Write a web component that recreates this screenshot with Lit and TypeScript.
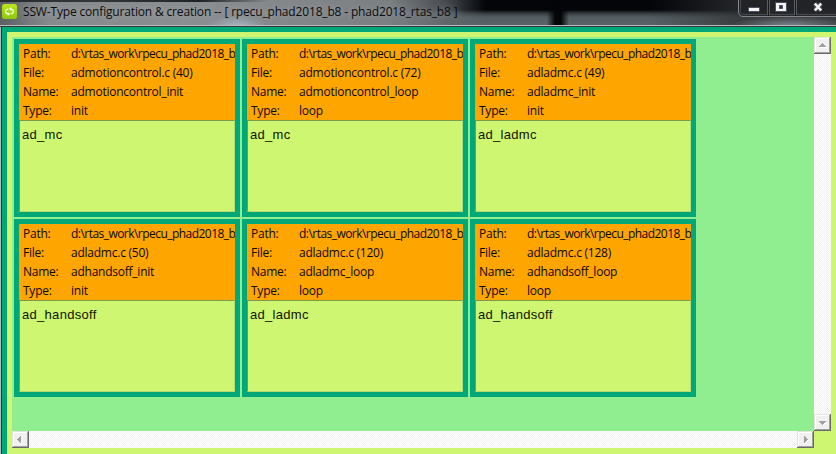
import { LitElement, html, css } from "lit";
import { customElement, property } from "lit/decorators.js";

interface TypeInfo {
  file: string;
  name: string;
  type: string;
  item: string;
}

const PATH = "d:\\rtas_work\\rpecu_phad2018_b8";

const TYPES: TypeInfo[] = [
  { file: "admotioncontrol.c (40)", name: "admotioncontrol_init", type: "init", item: "ad_mc" },
  { file: "admotioncontrol.c (72)", name: "admotioncontrol_loop", type: "loop", item: "ad_mc" },
  { file: "adladmc.c (49)", name: "adladmc_init", type: "init", item: "ad_ladmc" },
  { file: "adladmc.c (50)", name: "adhandsoff_init", type: "init", item: "ad_handsoff" },
  { file: "adladmc.c (120)", name: "adladmc_loop", type: "loop", item: "ad_ladmc" },
  { file: "adladmc.c (128)", name: "adhandsoff_loop", type: "loop", item: "ad_handsoff" },
];

@customElement("type-card")
export class TypeCard extends LitElement {
  @property({ attribute: false }) info!: TypeInfo;

  static styles = css`
    :host {
      display: flex;
      flex-direction: column;
      box-sizing: border-box;
      width: 226px;
      height: 178px;
      border: 5px solid #00a878;
      background: #cff670;
      overflow: hidden;
    }
    .head {
      height: 76px;
      background: #ffa500;
      overflow: hidden;
      flex: none;
    }
    .row {
      display: flex;
      height: 19px;
      padding-left: 4px;
      font: 12px/19px "Open Sans", "Noto Sans", sans-serif;
      letter-spacing: -0.24px;
      color: #0c0700;
      white-space: nowrap;
    }
    .key {
      width: 48px;
      flex: none;
    }
    .path {
      letter-spacing: -0.54px;
    }
    .list {
      flex: 1;
      box-sizing: border-box;
      border: 1px solid #7a9a50;
      border-right-color: #b9d873;
      border-bottom-color: #b9d873;
      padding-left: 2px;
      font: 13px/28px "Liberation Sans", Arial, sans-serif;
      letter-spacing: 0.3px;
      color: #101400;
    }
  `;

  render() {
    const rows = [
      ["Path:", PATH, "path"],
      ["File:", this.info.file, "file"],
      ["Name:", this.info.name, "name"],
      ["Type:", this.info.type, "type"],
    ];
    return html`
      <div class="head">
        ${rows.map(([k, v, c]) => html`<div class="row"><span class="key">${k}</span><span class=${c}>${v}</span></div>`)}
      </div>
      <div class="list">${this.info.item}</div>
    `;
  }
}

const ARROWS: Record<string, string> = {
  up: "M8 6h1v1h1v1h1v1h1v1H5V9h1V8h1V7h1z",
  down: "M5 7h7v1h-1v1h-1v1H9v1H8v-1H7V9H6V8H5z",
  left: "M9 5v7H8v-1H7v-1H6V9H5V8h1V7h1V6h1V5z",
  right: "M7 5h1v1h1v1h1v1h1v1h-1v1H9v1H8v1H7z",
};

@customElement("scroll-button")
export class ScrollButton extends LitElement {
  @property() direction = "up";

  static styles = css`
    :host {
      display: block;
      width: 17px;
      height: 17px;
      flex: none;
    }
    svg {
      display: block;
    }
  `;

  render() {
    return html`<svg width="17" height="17" shape-rendering="crispEdges">
      <path fill="#696969" d="M0 0h17v17H0z" />
      <path fill="#e3e3e3" d="M0 0h16v16H0z" />
      <path fill="#a0a0a0" d="M15 1h1v15H1v-1h14z" />
      <path fill="#fff" d="M1 1h14v14H1z" />
      <path fill="#f0f0f0" d="M2 2h13v13H2z" />
      <path fill="#fff" transform="translate(1 1)" d=${ARROWS[this.direction]} />
      <path fill="#a0a0a0" d=${ARROWS[this.direction]} />
    </svg>`;
  }
}

@customElement("app-root")
export class AppRoot extends LitElement {
  static styles = css`
    :host {
      display: flex;
      flex-direction: column;
      width: 836px;
      height: 454px;
      overflow: hidden;
      background: #cff670;
    }
    .titlebar {
      display: flex;
      flex: none;
      box-sizing: border-box;
      height: 27px;
      padding-left: 2px;
      border-bottom: 1px solid #34373b;
      background:
        linear-gradient(#b7bbbf, #b7bbbf) 0 25px / 100% 1px no-repeat,
        linear-gradient(90deg, transparent, rgba(3, 4, 8, 0.98) 8px 14px, transparent 22px) 547px 0 / 22px 25px no-repeat,
        radial-gradient(ellipse 60px 10px at 790px 26px, rgba(178, 195, 208, 0.55), transparent),
        radial-gradient(ellipse 30px 10px at 237px 26px, rgba(190, 210, 230, 0.6), transparent),
        linear-gradient(90deg, #26282a, #34373a 90px, #202326 200px, transparent 270px) 0 0 / 270px 2px no-repeat,
        linear-gradient(90deg, #5d6062, #888b8d 50px, #8b8e90 200px, #7a7f82 390px, rgba(100, 105, 109, 0.7) 445px, transparent 485px),
        linear-gradient(90deg, transparent 650px, rgba(48, 49, 51, 0.75) 740px),
        linear-gradient(#030509 0 10px, #30383c 13px, #535d61 17px, #596367 25px);
    }
    .logo {
      margin-top: 4px;
      flex: none;
    }
    .title {
      margin-left: 6px;
      font: 12px/24px "Open Sans", "Noto Sans", sans-serif;
      letter-spacing: -0.165px;
      color: #0b0c0e;
      white-space: pre;
      text-shadow: 0 0 7px rgba(190, 193, 196, 0.7);
    }
    .controls {
      margin-left: auto;
      flex: none;
    }
    .frame {
      flex: 1;
      min-height: 0;
      display: flex;
      border-left: 1px solid #b3b9bd;
    }
    .client {
      flex: 1;
      display: grid;
      grid-template: 394px 17px / 802px 17px;
      border-left: 1px solid #30383c;
      background:
        linear-gradient(#00a878, #00a878) 0 0 / 100% 5px no-repeat,
        linear-gradient(#00a878, #00a878) 0 0 / 5px 100% no-repeat,
        #cff670;
      padding: 10px 5px 0 10px;
    }
    .canvas {
      background: #90ee90;
      display: grid;
      grid-template-columns: repeat(3, 226px);
      grid-auto-rows: 178px;
      align-content: start;
      gap: 2px;
      padding: 2px;
    }
    .bar {
      display: flex;
      justify-content: space-between;
      background: repeating-conic-gradient(#fff 0 25%, #f0f0f0 0 50%) 0 0 / 2px 2px;
    }
    .vertical {
      flex-direction: column;
    }
  `;

  render() {
    return html`
      <header class="titlebar">
        <svg class="logo" width="15" height="15" viewBox="0 0 15 15">
          <defs>
            <linearGradient id="g" x2="0" y2="1">
              <stop stop-color="#b8e51c" />
              <stop offset="1" stop-color="#8cc80c" />
            </linearGradient>
          </defs>
          <rect width="15" height="15" rx="2.500" fill="url(#g)" />
          <path d="M6.300 5Q3.600 5.200 3.600 7.500Q3.600 9.600 6 10M8.700 10Q11.400 9.800 11.400 7.500Q11.400 5.400 9 5" fill="none" stroke="#f7ffe0" stroke-width="1.200" />
          <path d="M9.300 3L6.900 5L9.300 7zM5.700 8L8.100 10L5.700 12z" fill="#f7ffe0" />
        </svg>
        <span class="title">SSW-Type configuration &amp; creation -- [ rpecu_phad2018_b8 - phad2018_rtas_b8 ]</span>
        <svg class="controls" width="98" height="18" viewBox="738 0 98 18">
          <path d="M738 0H836V16H743Q738 16 738 12z" fill="#202225" fill-opacity=".65" />
          <path d="M738.500 0V12Q739 16.500 743 16.500H836" fill="none" stroke="#82868a" />
          <path d="M740.500 0V12Q741 14.500 743 14.500H836" fill="none" stroke="#45494d" />
          <path d="M767.500 0V15M769.500 0V15M794.500 0V15M796.500 0V15" fill="none" stroke="#595c60" />
          <path d="M768.500 0V16M795.500 0V16" fill="none" stroke="#17191c" />
          <rect x="748.500" y="7.500" width="11" height="4" rx="1" fill="#f3f3f3" stroke="#4c5062" />
          <path d="M775.500 2.500H786.500V11.500H775.500z" fill="#f3f3f3" stroke="#4c5062" />
          <path d="M779.500 5.500H782.500V8.500H779.500z" fill="#34363c" stroke="#4c5062" />
          <path d="M814.800 3.500L821.200 10.500M821.200 3.500L814.800 10.500" stroke="#4c5062" stroke-width="4.400" />
          <path d="M814.800 3.500L821.200 10.500M821.200 3.500L814.800 10.500" stroke="#f3f3f3" stroke-width="2.500" />
        </svg>
      </header>
      <div class="frame">
        <main class="client">
          <section class="canvas">${TYPES.map((t) => html`<type-card .info=${t}></type-card>`)}</section>
          <div class="bar vertical">
            <scroll-button direction="up"></scroll-button>
            <scroll-button direction="down"></scroll-button>
          </div>
          <div class="bar">
            <scroll-button direction="left"></scroll-button>
            <scroll-button direction="right"></scroll-button>
          </div>
        </main>
      </div>
    `;
  }
}
